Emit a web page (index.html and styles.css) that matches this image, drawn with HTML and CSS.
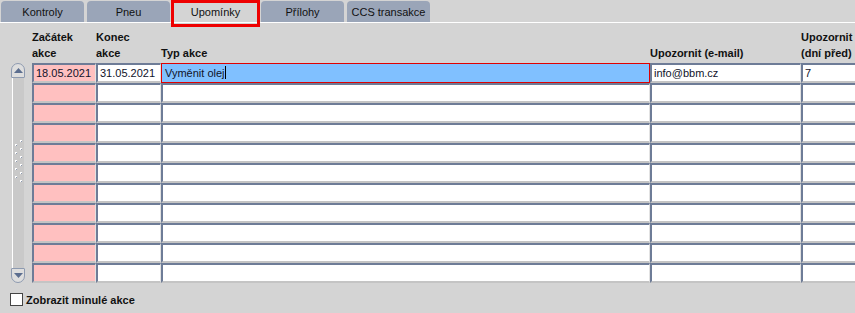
FILE: index.html
```html
<!DOCTYPE html>
<html lang="cs">
<head>
    <meta charset="UTF-8">
    <title>Upomínky</title>
    <link rel="stylesheet" href="styles.css">
</head>
<body>

    <div class="tabs">
        <div class="tab">Kontroly</div>
        <div class="tab">Pneu</div>
        <div class="tab active">Upomínky</div>
        <div class="tab">Přílohy</div>
        <div class="tab">CCS transakce</div>
    </div>

    <div class="panel">
        <div class="head">
            <div class="col c1">Začátek<br>akce</div>
            <div class="col c2">Konec<br>akce</div>
            <div class="col c3">Typ akce</div>
            <div class="col c4">Upozornit (e-mail)</div>
            <div class="col c5">Upozornit<br>(dní před)</div>
        </div>

        <div class="body">
            <div class="scroll">
                <div class="btn up"><svg width="9" height="5" viewBox="0 0 9 5"><path d="M0 5 L4.5 0 L9 5 Z" fill="#5c6e8f"/></svg></div>
                <div class="track">
                    <svg class="grip" width="8" height="44" viewBox="0 0 8 44">
                        <g fill="#fff">
                            <rect x="5" y="0" width="2" height="2"/><rect x="0" y="4" width="2" height="2"/>
                            <rect x="5" y="8" width="2" height="2"/><rect x="0" y="12" width="2" height="2"/>
                            <rect x="5" y="16" width="2" height="2"/><rect x="0" y="20" width="2" height="2"/>
                            <rect x="5" y="24" width="2" height="2"/><rect x="0" y="28" width="2" height="2"/>
                            <rect x="5" y="32" width="2" height="2"/><rect x="0" y="36" width="2" height="2"/>
                            <rect x="5" y="40" width="2" height="2"/>
                        </g>
                        <g fill="#8e9bb0">
                            <rect x="6" y="1" width="1" height="1"/><rect x="1" y="5" width="1" height="1"/>
                            <rect x="6" y="9" width="1" height="1"/><rect x="1" y="13" width="1" height="1"/>
                            <rect x="6" y="17" width="1" height="1"/><rect x="1" y="21" width="1" height="1"/>
                            <rect x="6" y="25" width="1" height="1"/><rect x="1" y="29" width="1" height="1"/>
                            <rect x="6" y="33" width="1" height="1"/><rect x="1" y="37" width="1" height="1"/>
                            <rect x="6" y="41" width="1" height="1"/>
                        </g>
                    </svg>
                </div>
                <div class="btn down"><svg width="9" height="5" viewBox="0 0 9 5"><path d="M0 0 L9 0 L4.5 5 Z" fill="#5c6e8f"/></svg></div>
            </div>

            <div class="rows" id="rows">
                <div class="row">
                    <div class="cell c1 date">18.05.2021</div>
                    <div class="cell c2">31.05.2021</div>
                    <div class="cell c3 editing">Vyměnit olej<span class="caret"></span></div>
                    <div class="cell c4">info@bbm.cz</div>
                    <div class="cell c5">7</div>
                </div>
            </div>
        </div>

        <label class="opt"><span class="box"></span>Zobrazit minulé akce</label>
    </div>

    <script>
        // empty rows under the first one
        const rows = document.getElementById('rows');
        for (let i = 0; i < 10; i++) {
            const row = document.createElement('div');
            row.className = 'row';
            row.innerHTML = '<div class="cell c1 date"></div><div class="cell c2"></div>' +
                '<div class="cell c3"></div><div class="cell c4"></div><div class="cell c5"></div>';
            rows.appendChild(row);
        }
    </script>

</body>
</html>
```

FILE: styles.css
```css
body {
    font-family: "Liberation Sans", Arial, sans-serif;
    font-size: 11px;
    color: #10132a;
    background-color: #d4d4d4;
    margin: 0;
    width: 855px;
    height: 313px;
    overflow: hidden;
}
.tabs {
    display: flex;
    gap: 3px;
    padding: 1px 0 0 1px;
    height: 21px;
    border-bottom: 1px solid #fff;
}
.tab {
    width: 83px;
    height: 21px;
    line-height: 23px;
    text-align: center;
    background-color: #9aa5b8;
    border-radius: 4px 4px 0 0;
    color: #111;
}
.tab.active {
    position: relative;
    margin: 0 1px;
    background-color: #d4d4d4;
}
/* red highlight frame around the current tab */
.tab.active::after {
    content: "";
    position: absolute;
    top: -1px;
    left: -3px;
    right: -3px;
    bottom: -5px;
    border: 3px solid #ee0000;
}
.panel {
    padding-top: 5px;
}
.head {
    display: flex;
    align-items: flex-end;
    padding-left: 32px;
    height: 35px;
    font-weight: bold;
    line-height: 16px;
    color: #111;
}
.col {
    flex: none;
    padding-bottom: 2px;
}
.c1 { width: 64px; }
.c2 { width: 65px; }
.c3 { width: 489px; }
.c4 { width: 151px; }
.c5 { width: 60px; }
.body {
    display: flex;
}
.scroll {
    flex: none;
    width: 14px;
    margin: 0 7px 0 11px;
    display: flex;
    flex-direction: column;
}
.btn {
    height: 15px;
    box-sizing: border-box;
    border: 1px solid #8d9ab0;
    background-color: #dedede;
    display: flex;
    align-items: center;
    justify-content: center;
}
.btn.up {
    border-radius: 7px 7px 1px 1px;
}
.btn.down {
    border-radius: 1px 1px 7px 7px;
}
.track {
    flex: 1;
    margin: 0 1px;
    background-color: #c9c9c9;
    border-left: 1px solid #fff;
    display: flex;
    align-items: center;
    justify-content: center;
}
.grip {
    margin-top: -22px;
}
.rows {
    flex: none;
}
.row {
    display: flex;
    height: 20px;
}
.cell {
    flex: none;
    box-sizing: border-box;
    height: 20px;
    line-height: 16px;
    padding-left: 2px;
    background-color: #fff;
    border-top: 2px solid #6e7c97;
    border-left: 2px solid #6e7c97;
    border-right: 1px solid #e2e2e2;
    border-bottom: 2px solid #c4c4c4;
    white-space: nowrap;
    overflow: hidden;
}
.cell.date {
    background-color: #ffc0c0;
}
.cell.editing {
    background-color: #80c0ff;
    border: 1px solid #e00000;
    padding-left: 3px;
    line-height: 18px;
}
.caret {
    display: inline-block;
    width: 1px;
    height: 13px;
    background-color: #000;
    vertical-align: -2px;
}
.opt {
    display: flex;
    align-items: center;
    gap: 3px;
    margin: 10px 0 0 10px;
    font-weight: bold;
    color: #111;
}
.box {
    width: 11px;
    height: 11px;
    border: 1px solid #444;
    background-color: #fff;
}
```
